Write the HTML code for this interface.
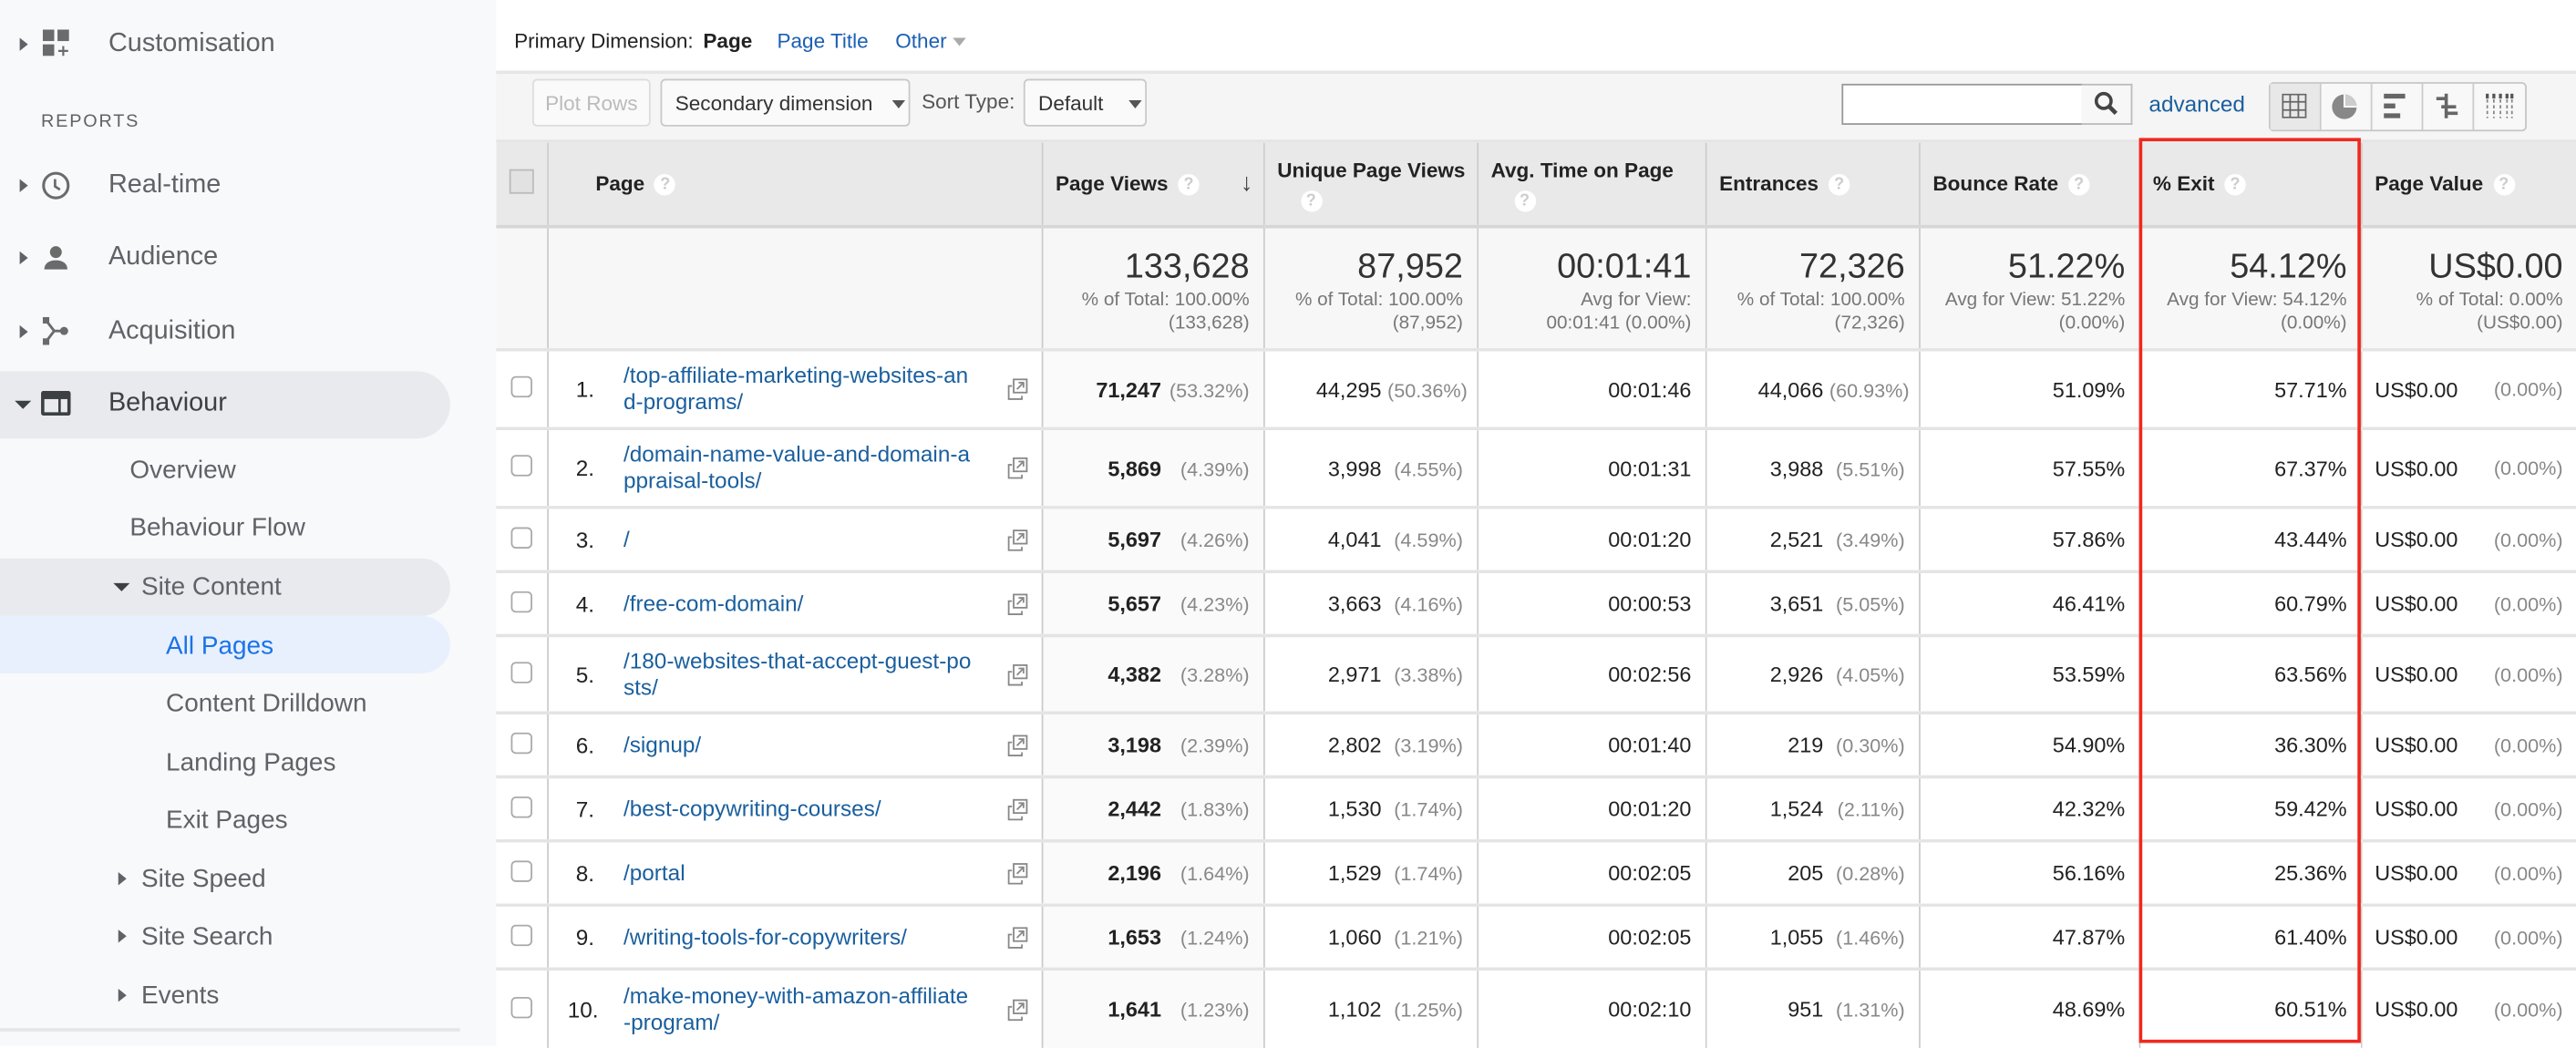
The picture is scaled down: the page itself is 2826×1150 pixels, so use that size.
<!DOCTYPE html>
<html><head><meta charset="utf-8">
<style>
html,body{margin:0;padding:0;width:2826px;height:1148px;overflow:hidden;background:#fff}
#w{position:absolute;left:0;top:0;width:1568px;height:637px;transform:scale(1.8023);transform-origin:0 0;font-family:"Liberation Sans",Arial,sans-serif;}
.sb{position:absolute;left:0;top:0;width:302px;height:637px;background:#f8f9fa;}
.it{position:absolute;font-size:16px;color:#5f6368;white-space:nowrap}
.sub{font-size:15.5px}
.ar{position:absolute;width:0;height:0;border-top:4px solid transparent;border-bottom:4px solid transparent;border-left:5px solid #5f6368}
.ad{position:absolute;width:0;height:0;border-left:5px solid transparent;border-right:5px solid transparent;border-top:5px solid #3c4043}
.a{position:absolute;white-space:nowrap}
table{position:absolute;left:302px;top:85px;width:1266px;border-collapse:collapse;table-layout:fixed;font-size:13px;color:#222}
td,th{border-left:1px solid #ccc;border-top:2px solid #e4e4e4;padding:0 8px;overflow:hidden;white-space:nowrap}
th{background:#e9e9e9;text-align:left;font-weight:bold;font-size:12.5px;vertical-align:middle;border-bottom:2px solid #d6d6d6}
td{text-align:right;background:#fff;position:relative}
td.pv{background:#fafafa}
.tot td{background:#f7f7f7;vertical-align:top;padding-top:12px;color:#777;font-size:11.5px;line-height:14px}
.tot td b{display:block;font-weight:normal;color:#333;font-size:21px;line-height:24px;margin-bottom:1px}
.q{display:inline-block;width:13px;height:13px;border-radius:50%;background:#fff;color:#ccc;font-size:10px;text-align:center;line-height:13px;vertical-align:middle;margin-left:6px;font-weight:bold}
.p{display:inline-block;color:#888;font-size:12px;text-align:right}
.pr{position:absolute;right:8px;top:50%;transform:translateY(-50%);color:#888;font-size:12px}
.cb{display:inline-block;width:11px;height:11px;border:1px solid #aaa;border-radius:3px;background:#fff}
td.pg{text-align:left;padding:0}
.n{position:absolute;left:17px;top:50%;transform:translateY(-50%);font-size:13.5px;color:#222}
.u{position:absolute;left:46px;top:50%;transform:translateY(-50%);color:#1a5f9e;font-size:13.5px;line-height:16px}
.ic{position:absolute;right:8px;top:50%;margin-top:-7px}
.btn{position:absolute;top:48px;height:29px;border:1px solid #c9c9c9;border-radius:3px;background:#fafafa;font-size:12.5px;line-height:29px;box-sizing:border-box;color:#333}
.tri{display:inline-block;border-left:4px solid transparent;border-right:4px solid transparent;border-top:5px solid #555;vertical-align:middle;margin-left:8px}
</style></head><body><div id="w">
<div class="sb">
 <div class="ar" style="left:12px;top:23px"></div>
 <svg class="a" style="left:26px;top:18px" width="17" height="17" viewBox="0 0 17 17"><rect x="0" y="0" width="7" height="7" fill="#6b6b6b"/><rect x="9" y="0" width="7" height="7" fill="#6b6b6b"/><rect x="0" y="9" width="7" height="7" fill="#6b6b6b"/><path d="M12.5 10v6M9.5 13h6" stroke="#6b6b6b" stroke-width="1.2"/></svg>
 <div class="it" style="left:66px;top:18px">Customisation</div>
 <div class="it" style="left:25px;top:68px;font-size:11px;letter-spacing:1px">REPORTS</div>
 <div class="ar" style="left:12px;top:109px"></div>
 <svg class="a" style="left:25px;top:104px" width="18" height="18" viewBox="0 0 18 18"><circle cx="9" cy="9" r="7.5" fill="none" stroke="#6b6b6b" stroke-width="1.7"/><path d="M8.5 5v4.5l3 2" fill="none" stroke="#6b6b6b" stroke-width="1.5"/></svg>
 <div class="it" style="left:66px;top:104px">Real-time</div>
 <div class="ar" style="left:12px;top:153px"></div>
 <svg class="a" style="left:26px;top:149px" width="16" height="16" viewBox="0 0 16 16"><circle cx="8" cy="4.5" r="3.6" fill="#6b6b6b"/><path d="M1 15c0-4 3.5-5.5 7-5.5s7 1.5 7 5.5z" fill="#6b6b6b"/></svg>
 <div class="it" style="left:66px;top:148px">Audience</div>
 <div class="ar" style="left:12px;top:198px"></div>
 <svg class="a" style="left:26px;top:193px" width="16" height="17" viewBox="0 0 16 17"><rect x="0" y="0" width="4" height="4" fill="#6b6b6b"/><rect x="0" y="13" width="4" height="4" fill="#6b6b6b"/><circle cx="13" cy="8.5" r="2.5" fill="#6b6b6b"/><path d="M2 2l5 6.5H12M7 8.5L2 15" fill="none" stroke="#6b6b6b" stroke-width="1.6"/></svg>
 <div class="it" style="left:66px;top:193px">Acquisition</div>
 <div style="position:absolute;left:0;top:226px;width:274px;height:41px;background:#e8eaed;border-radius:0 21px 21px 0"></div>
 <div class="ad" style="left:9px;top:244px"></div>
 <svg class="a" style="left:25px;top:238px" width="18" height="15" viewBox="0 0 18 15"><rect x="0" y="0" width="18" height="15" rx="1.5" fill="#3c4043"/><rect x="2" y="5" width="8.5" height="8" fill="#e8eaed"/><rect x="12" y="5" width="4" height="8" fill="#e8eaed"/></svg>
 <div class="it" style="left:66px;top:237px;color:#3c4043">Behaviour</div>
 <div class="it sub" style="left:79px;top:278px">Overview</div>
 <div class="it sub" style="left:79px;top:313px">Behaviour Flow</div>
 <div style="position:absolute;left:0;top:340px;width:274px;height:35px;background:#e8eaed;border-radius:0 18px 18px 0"></div>
 <div class="ad" style="left:69px;top:355px"></div>
 <div class="it sub" style="left:86px;top:349px">Site Content</div>
 <div style="position:absolute;left:0;top:375px;width:274px;height:35px;background:#e8f0fe;border-radius:0 18px 18px 0"></div>
 <div class="it sub" style="left:101px;top:385px;color:#1a73e8">All Pages</div>
 <div class="it sub" style="left:101px;top:420px">Content Drilldown</div>
 <div class="it sub" style="left:101px;top:456px">Landing Pages</div>
 <div class="it sub" style="left:101px;top:491px">Exit Pages</div>
 <div class="ar" style="left:72px;top:531px"></div>
 <div class="it sub" style="left:86px;top:527px">Site Speed</div>
 <div class="ar" style="left:72px;top:566px"></div>
 <div class="it sub" style="left:86px;top:562px">Site Search</div>
 <div class="ar" style="left:72px;top:602px"></div>
 <div class="it sub" style="left:86px;top:598px">Events</div>
 <div style="position:absolute;left:0;top:626px;width:280px;height:2px;background:#e6e6e6"></div>
</div>

<div class="a" style="left:313px;top:18px;font-size:12.5px;color:#222">Primary Dimension:</div>
<div class="a" style="left:428px;top:18px;font-size:12.5px;color:#222;font-weight:bold">Page</div>
<div class="a" style="left:473px;top:18px;font-size:12.5px;color:#1a5fb4">Page Title</div>
<div class="a" style="left:545px;top:18px;font-size:12.5px;color:#1a5fb4">Other <span style="display:inline-block;border-left:4px solid transparent;border-right:4px solid transparent;border-top:5px solid #aaa;vertical-align:middle"></span></div>
<div style="position:absolute;left:302px;top:43px;width:1266px;height:42px;background:#f5f5f5;border-top:2px solid #e6e6e6;box-sizing:border-box"></div>
<div class="btn" style="left:324px;width:72px;color:#bbb;text-align:center;border-color:#ddd">Plot Rows</div>
<div class="btn" style="left:402px;width:152px;padding-left:8px">Secondary dimension <span class="tri"></span></div>
<div class="a" style="left:561px;top:55px;font-size:12.5px;color:#555">Sort Type:</div>
<div class="btn" style="left:623px;width:75px;padding-left:8px">Default <span class="tri" style="margin-left:12px"></span></div>
<div style="position:absolute;left:1121px;top:51px;width:147px;height:25px;background:#fff;border:1px solid #999;box-sizing:border-box"></div>
<div style="position:absolute;left:1267px;top:51px;width:31px;height:25px;background:#f7f7f7;border:1px solid #bbb;border-left:none;box-sizing:border-box"></div>
<svg class="a" style="left:1274px;top:55px" width="16" height="16" viewBox="0 0 16 16"><circle cx="6.5" cy="6.5" r="4.5" fill="none" stroke="#444" stroke-width="2"/><path d="M10 10l4 4" stroke="#444" stroke-width="2.6"/></svg>
<div class="a" style="left:1308px;top:56px;font-size:13.5px;color:#1a5f9e">advanced</div>
<div style="position:absolute;left:1381px;top:50px;width:157px;height:30px;border:1px solid #c6c6c6;border-radius:3px;background:#f8f8f8;box-sizing:border-box"></div>
<div style="position:absolute;left:1382px;top:51px;width:30px;height:28px;background:#e8e8e8"></div>
<div style="position:absolute;left:1412px;top:51px;width:1px;height:28px;background:#ccc"></div>
<div style="position:absolute;left:1443px;top:51px;width:1px;height:28px;background:#ccc"></div>
<div style="position:absolute;left:1474px;top:51px;width:1px;height:28px;background:#ccc"></div>
<div style="position:absolute;left:1505px;top:51px;width:1px;height:28px;background:#ccc"></div>
<svg class="a" style="left:1389px;top:57px" width="15" height="15" viewBox="0 0 15 15"><path d="M.5.5h14v14H.5zM5 .5v14M10 .5v14M.5 5h14M.5 10h14" fill="none" stroke="#666" stroke-width="1"/></svg>
<svg class="a" style="left:1419px;top:57px" width="16" height="16" viewBox="0 0 16 16"><circle cx="8" cy="8" r="7.5" fill="#888"/><path d="M8 .5V8h7.5A7.5 7.5 0 0 0 8 .5z" fill="#ccc"/><path d="M8 .5V8h7.5" stroke="#fff" fill="none"/></svg>
<svg class="a" style="left:1451px;top:57px" width="15" height="15" viewBox="0 0 15 15"><rect x="0" y="0" width="13" height="3" fill="#666"/><rect x="0" y="6" width="7" height="3" fill="#666"/><rect x="0" y="12" width="10" height="3" fill="#666"/></svg>
<svg class="a" style="left:1482px;top:56px" width="15" height="17" viewBox="0 0 15 17"><path d="M1 4h6M7 1v15M7 9h6M4 9h3M7 13h7" stroke="#666" stroke-width="2" fill="none"/></svg>
<svg class="a" style="left:1513px;top:57px" width="17" height="15" viewBox="0 0 17 15"><path d="M1 0v15M5 0v15M9 0v15M13 0v15M16 0v15" stroke="#888" stroke-width="1" stroke-dasharray="2 1.5"/><path d="M1 0v3M5 0v3M9 0v3M13 0v3M16 0v3" stroke="#555" stroke-width="1.8"/></svg>

<table>
<colgroup><col style="width:31px"><col style="width:301px"><col style="width:135px"><col style="width:130px"><col style="width:139px"><col style="width:130px"><col style="width:134px"><col style="width:135px"><col style="width:131px"></colgroup>
<tr style="height:52px">
<th style="border-left:none;padding:0 8px"><span style="display:inline-block;width:13px;height:13px;border:1px solid #bbb;background:#e2e2e2"></span></th>
<th style="padding-left:29px">Page<span class="q">?</span></th>
<th class="pv" style="position:relative">Page Views<span class="q">?</span><span style="position:absolute;right:6px;top:16px;font-size:15px;color:#444;font-weight:normal">&#8595;</span></th>
<th style="vertical-align:top;padding-top:8px;line-height:18px">Unique Page Views<br><span class="q" style="margin-left:14px">?</span></th>
<th style="vertical-align:top;padding-top:8px;line-height:18px">Avg. Time on Page<br><span class="q" style="margin-left:14px">?</span></th>
<th>Entrances<span class="q">?</span></th>
<th>Bounce Rate<span class="q">?</span></th>
<th>% Exit<span class="q">?</span></th>
<th>Page Value<span class="q">?</span></th>
</tr>
<tr class="tot" style="height:75px">
<td style="border-left:none"></td><td></td>
<td><b>133,628</b>% of Total: 100.00%<br>(133,628)</td>
<td><b>87,952</b>% of Total: 100.00%<br>(87,952)</td>
<td><b>00:01:41</b>Avg for View:<br>00:01:41 (0.00%)</td>
<td><b>72,326</b>% of Total: 100.00%<br>(72,326)</td>
<td><b>51.22%</b>Avg for View: 51.22%<br>(0.00%)</td>
<td><b>54.12%</b>Avg for View: 54.12%<br>(0.00%)</td>
<td><b>US$0.00</b>% of Total: 0.00%<br>(US$0.00)</td>
</tr>
<tr style="height:48px"><td style="border-left:none;text-align:center;padding:0"><span class="cb"></span></td><td class="pg"><span class="n">1.</span><span class="u">/top-affiliate-marketing-websites-an<br>d-programs/</span><svg class="ic" width="13" height="14" viewBox="0 0 13 14"><rect x="4" y="1" width="8" height="8" fill="#fff" stroke="#888"/><path d="M3 5H1v8h8v-2" fill="none" stroke="#888"/><path d="M6 7l4-4M7 3h3v3" stroke="#888" fill="none"/></svg></td><td class="pv"><b>71,247</b> <span class="p" style="width:50px">(53.32%)</span></td><td>44,295 <span class="p" style="width:46px">(50.36%)</span></td><td>00:01:46</td><td>44,066 <span class="p" style="width:46px">(60.93%)</span></td><td>51.09%</td><td>57.71%</td><td style="text-align:left">US$0.00<span class="pr">(0.00%)</span></td></tr>
<tr style="height:48px"><td style="border-left:none;text-align:center;padding:0"><span class="cb"></span></td><td class="pg"><span class="n">2.</span><span class="u">/domain-name-value-and-domain-a<br>ppraisal-tools/</span><svg class="ic" width="13" height="14" viewBox="0 0 13 14"><rect x="4" y="1" width="8" height="8" fill="#fff" stroke="#888"/><path d="M3 5H1v8h8v-2" fill="none" stroke="#888"/><path d="M6 7l4-4M7 3h3v3" stroke="#888" fill="none"/></svg></td><td class="pv"><b>5,869</b> <span class="p" style="width:50px">(4.39%)</span></td><td>3,998 <span class="p" style="width:46px">(4.55%)</span></td><td>00:01:31</td><td>3,988 <span class="p" style="width:46px">(5.51%)</span></td><td>57.55%</td><td>67.37%</td><td style="text-align:left">US$0.00<span class="pr">(0.00%)</span></td></tr>
<tr style="height:39px"><td style="border-left:none;text-align:center;padding:0"><span class="cb"></span></td><td class="pg"><span class="n">3.</span><span class="u">/</span><svg class="ic" width="13" height="14" viewBox="0 0 13 14"><rect x="4" y="1" width="8" height="8" fill="#fff" stroke="#888"/><path d="M3 5H1v8h8v-2" fill="none" stroke="#888"/><path d="M6 7l4-4M7 3h3v3" stroke="#888" fill="none"/></svg></td><td class="pv"><b>5,697</b> <span class="p" style="width:50px">(4.26%)</span></td><td>4,041 <span class="p" style="width:46px">(4.59%)</span></td><td>00:01:20</td><td>2,521 <span class="p" style="width:46px">(3.49%)</span></td><td>57.86%</td><td>43.44%</td><td style="text-align:left">US$0.00<span class="pr">(0.00%)</span></td></tr>
<tr style="height:39px"><td style="border-left:none;text-align:center;padding:0"><span class="cb"></span></td><td class="pg"><span class="n">4.</span><span class="u">/free-com-domain/</span><svg class="ic" width="13" height="14" viewBox="0 0 13 14"><rect x="4" y="1" width="8" height="8" fill="#fff" stroke="#888"/><path d="M3 5H1v8h8v-2" fill="none" stroke="#888"/><path d="M6 7l4-4M7 3h3v3" stroke="#888" fill="none"/></svg></td><td class="pv"><b>5,657</b> <span class="p" style="width:50px">(4.23%)</span></td><td>3,663 <span class="p" style="width:46px">(4.16%)</span></td><td>00:00:53</td><td>3,651 <span class="p" style="width:46px">(5.05%)</span></td><td>46.41%</td><td>60.79%</td><td style="text-align:left">US$0.00<span class="pr">(0.00%)</span></td></tr>
<tr style="height:47px"><td style="border-left:none;text-align:center;padding:0"><span class="cb"></span></td><td class="pg"><span class="n">5.</span><span class="u">/180-websites-that-accept-guest-po<br>sts/</span><svg class="ic" width="13" height="14" viewBox="0 0 13 14"><rect x="4" y="1" width="8" height="8" fill="#fff" stroke="#888"/><path d="M3 5H1v8h8v-2" fill="none" stroke="#888"/><path d="M6 7l4-4M7 3h3v3" stroke="#888" fill="none"/></svg></td><td class="pv"><b>4,382</b> <span class="p" style="width:50px">(3.28%)</span></td><td>2,971 <span class="p" style="width:46px">(3.38%)</span></td><td>00:02:56</td><td>2,926 <span class="p" style="width:46px">(4.05%)</span></td><td>53.59%</td><td>63.56%</td><td style="text-align:left">US$0.00<span class="pr">(0.00%)</span></td></tr>
<tr style="height:39px"><td style="border-left:none;text-align:center;padding:0"><span class="cb"></span></td><td class="pg"><span class="n">6.</span><span class="u">/signup/</span><svg class="ic" width="13" height="14" viewBox="0 0 13 14"><rect x="4" y="1" width="8" height="8" fill="#fff" stroke="#888"/><path d="M3 5H1v8h8v-2" fill="none" stroke="#888"/><path d="M6 7l4-4M7 3h3v3" stroke="#888" fill="none"/></svg></td><td class="pv"><b>3,198</b> <span class="p" style="width:50px">(2.39%)</span></td><td>2,802 <span class="p" style="width:46px">(3.19%)</span></td><td>00:01:40</td><td>219 <span class="p" style="width:46px">(0.30%)</span></td><td>54.90%</td><td>36.30%</td><td style="text-align:left">US$0.00<span class="pr">(0.00%)</span></td></tr>
<tr style="height:39px"><td style="border-left:none;text-align:center;padding:0"><span class="cb"></span></td><td class="pg"><span class="n">7.</span><span class="u">/best-copywriting-courses/</span><svg class="ic" width="13" height="14" viewBox="0 0 13 14"><rect x="4" y="1" width="8" height="8" fill="#fff" stroke="#888"/><path d="M3 5H1v8h8v-2" fill="none" stroke="#888"/><path d="M6 7l4-4M7 3h3v3" stroke="#888" fill="none"/></svg></td><td class="pv"><b>2,442</b> <span class="p" style="width:50px">(1.83%)</span></td><td>1,530 <span class="p" style="width:46px">(1.74%)</span></td><td>00:01:20</td><td>1,524 <span class="p" style="width:46px">(2.11%)</span></td><td>42.32%</td><td>59.42%</td><td style="text-align:left">US$0.00<span class="pr">(0.00%)</span></td></tr>
<tr style="height:39px"><td style="border-left:none;text-align:center;padding:0"><span class="cb"></span></td><td class="pg"><span class="n">8.</span><span class="u">/portal</span><svg class="ic" width="13" height="14" viewBox="0 0 13 14"><rect x="4" y="1" width="8" height="8" fill="#fff" stroke="#888"/><path d="M3 5H1v8h8v-2" fill="none" stroke="#888"/><path d="M6 7l4-4M7 3h3v3" stroke="#888" fill="none"/></svg></td><td class="pv"><b>2,196</b> <span class="p" style="width:50px">(1.64%)</span></td><td>1,529 <span class="p" style="width:46px">(1.74%)</span></td><td>00:02:05</td><td>205 <span class="p" style="width:46px">(0.28%)</span></td><td>56.16%</td><td>25.36%</td><td style="text-align:left">US$0.00<span class="pr">(0.00%)</span></td></tr>
<tr style="height:39px"><td style="border-left:none;text-align:center;padding:0"><span class="cb"></span></td><td class="pg"><span class="n">9.</span><span class="u">/writing-tools-for-copywriters/</span><svg class="ic" width="13" height="14" viewBox="0 0 13 14"><rect x="4" y="1" width="8" height="8" fill="#fff" stroke="#888"/><path d="M3 5H1v8h8v-2" fill="none" stroke="#888"/><path d="M6 7l4-4M7 3h3v3" stroke="#888" fill="none"/></svg></td><td class="pv"><b>1,653</b> <span class="p" style="width:50px">(1.24%)</span></td><td>1,060 <span class="p" style="width:46px">(1.21%)</span></td><td>00:02:05</td><td>1,055 <span class="p" style="width:46px">(1.46%)</span></td><td>47.87%</td><td>61.40%</td><td style="text-align:left">US$0.00<span class="pr">(0.00%)</span></td></tr>
<tr style="height:48px"><td style="border-left:none;text-align:center;padding:0"><span class="cb"></span></td><td class="pg"><span class="n" style="left:12px">10.</span><span class="u">/make-money-with-amazon-affiliate<br>-program/</span><svg class="ic" width="13" height="14" viewBox="0 0 13 14"><rect x="4" y="1" width="8" height="8" fill="#fff" stroke="#888"/><path d="M3 5H1v8h8v-2" fill="none" stroke="#888"/><path d="M6 7l4-4M7 3h3v3" stroke="#888" fill="none"/></svg></td><td class="pv"><b>1,641</b> <span class="p" style="width:50px">(1.23%)</span></td><td>1,102 <span class="p" style="width:46px">(1.25%)</span></td><td>00:02:10</td><td>951 <span class="p" style="width:46px">(1.31%)</span></td><td>48.69%</td><td>60.51%</td><td style="text-align:left">US$0.00<span class="pr">(0.00%)</span></td></tr>
</table>
<div style="position:absolute;left:1302px;top:84px;width:135px;height:551px;border:2px solid #f0281e;box-sizing:border-box"></div>
</div></body></html>
